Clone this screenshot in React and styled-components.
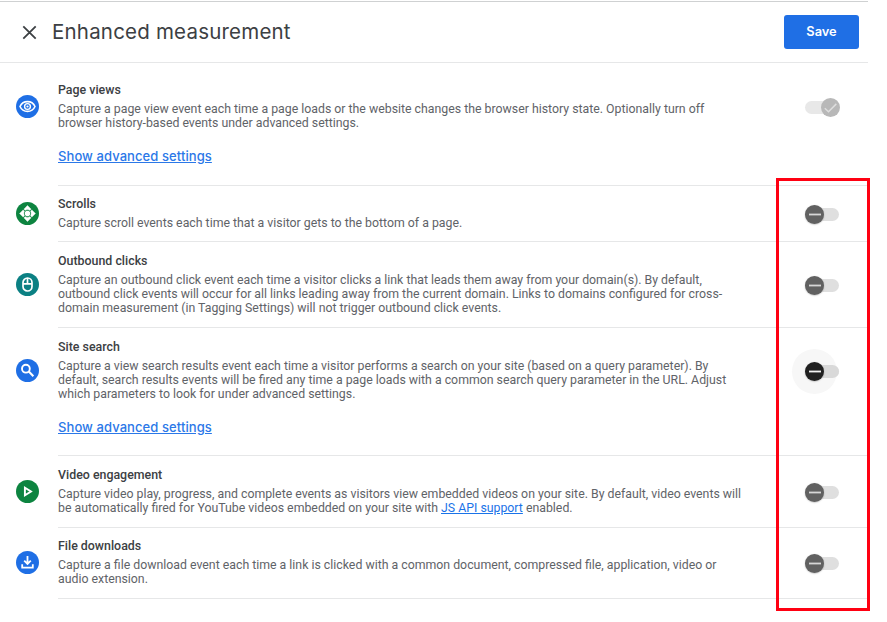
import React from "react";
import styled, { createGlobalStyle, css } from "styled-components";

const GlobalStyle = createGlobalStyle`
  * { box-sizing: border-box; }
  body { margin: 0; background: #fff; font-family: Roboto, sans-serif; }
`;

const Page = styled.main`
  position: relative;
  width: 887px;
  height: 622px;
  overflow: hidden;
  background: #fff;
`;

const Panel = styled.section`
  width: 868px;
  margin-top: 1px;
  border-top: 1px solid #cfd1d2;
`;

const Header = styled.header`
  display: flex;
  align-items: center;
  height: 61px;
  padding: 0 9px 0 22px;
  border-bottom: 1px solid #e6e7e8;
`;

const CloseButton = styled.button`
  display: flex;
  width: 15px;
  height: 15px;
  padding: 0;
  border: 0;
  background: none;
`;

const Title = styled.h1`
  flex: 1;
  margin: 0 0 0 15px;
  font: 400 20.5px/28px Inter, sans-serif;
  letter-spacing: 0.2px;
  color: #3c4043;
`;

const SaveButton = styled.button`
  width: 75px;
  height: 34px;
  padding: 0;
  border: 0;
  border-radius: 3px;
  background: #1f6fe5;
  color: #fff;
  font: 600 12.8px/34px Inter, sans-serif;
`;

const Row = styled.article`
  height: ${(p) => p.$height}px;
  padding-top: ${(p) => p.$inset || 0}px;
`;

const RowMain = styled.div`
  display: grid;
  grid-template-columns: 58px 1fr 64px;
  align-items: center;
  height: ${(p) => p.$height}px;
`;

const RowText = styled.div`
  padding-bottom: 0.6px;
`;

const Divider = styled.hr`
  height: 1px;
  margin: 0 0 0 58px;
  border: 0;
  background: #e6e7e8;
`;

const Badge = styled.span`
  display: flex;
  width: 23px;
  height: 23px;
  margin-left: 16px;
  border-radius: 50%;
  background: ${(p) => p.$color};
  svg { display: block; width: 23px; height: 23px; }
`;

const Name = styled.h2`
  margin: 0 0 5px;
  font: 500 12.4px/15px Roboto, sans-serif;
  color: #3c4043;
`;

const Description = styled.p`
  margin: 0;
  font: 400 12.32px/14.4px Roboto, sans-serif;
  color: #5f6368;
  white-space: nowrap;
`;

const InlineLink = styled.a`
  color: #1a73e8;
  text-decoration: underline;
`;

const AdvancedLink = styled.a`
  display: block;
  width: max-content;
  margin: ${(p) => p.$gap}px 0 0 58px;
  font: 500 13px/18px Inter, sans-serif;
  letter-spacing: 0.08px;
  color: #2b78e8;
  text-decoration: underline;
`;

const Switch = styled.span`
  position: relative;
  display: block;
  width: 34px;
  height: 19px;
  margin: 1px 0 0 1px;
  &::before {
    content: "";
    position: absolute;
    inset: 3px 0;
    border-radius: 7px;
    background: ${(p) => (p.$on ? "#e8e8e8" : "#dfdfdf")};
  }
`;

const Knob = styled.span`
  position: absolute;
  top: 0;
  left: ${(p) => (p.$on ? 15.5 : 0)}px;
  width: 19px;
  height: 19px;
  border-radius: 50%;
  background: ${(p) => (p.$on ? "#b8b8b8" : p.$focused ? "#202020" : "#616161")};
  ${(p) => !p.$on && css`box-shadow: 0 0.5px 1.5px rgba(0, 0, 0, 0.3);`}
  svg { display: block; }
`;

const Halo = styled.span`
  position: absolute;
  top: -13px;
  left: -13px;
  width: 45px;
  height: 45px;
  border-radius: 50%;
  background: #f7f7f7;
`;

const TrackOver = styled.span`
  position: absolute;
  inset: 3px 0;
  border-radius: 7px;
  background: #d9d9d9;
`;

const Highlight = styled.div`
  position: absolute;
  top: 178px;
  left: 776px;
  width: 94px;
  height: 433px;
  border: 3px solid #ff0012;
  pointer-events: none;
`;

function Toggle({ on, focused }) {
  return (
    <Switch role="switch" aria-checked={!!on} $on={on}>
      {focused && <Halo />}
      {focused && <TrackOver />}
      <Knob $on={on} $focused={focused}>
        <svg width="19" height="19" viewBox="0 0 19 19" fill="none">
          {on ? (
            <path d="M3.8 10.2 7.5 13.7 15.3 5.9" stroke="#dedede" strokeWidth="1.5" />
          ) : (
            <path d="M4 9.5H16" stroke={focused ? "#f2f2f2" : "#d6d6d6"} strokeWidth="1.8" />
          )}
        </svg>
      </Knob>
    </Switch>
  );
}

const scrollArrow = "M11.5 3.6 15.1 7.2 13.7 8.3Q11.5 6.9 9.3 8.3L7.9 7.2Z";

const icons = {
  eye: (
    <svg viewBox="0 0 23 23" fill="none" stroke="#fff">
      <path d="M4 11.5C5.5 8.2 8.3 6.6 11.5 6.6S17.5 8.2 19 11.5C17.5 14.8 14.7 16.4 11.5 16.4S5.5 14.8 4 11.5Z" strokeWidth="1.6" />
      <circle cx="11.5" cy="11.5" r="2.9" strokeWidth="1.4" />
      <circle cx="11.5" cy="11.5" r="1.1" fill="#fff" stroke="none" />
    </svg>
  ),
  scroll: (
    <svg viewBox="0 0 23 23" fill="#fff">
      {[0, 90, 180, 270].map((angle) => (
        <path key={angle} d={scrollArrow} transform={`rotate(${angle} 11.5 11.5)`} stroke="#fff" strokeWidth="0.5" />
      ))}
      <circle cx="11.5" cy="11.5" r="2.7" />
    </svg>
  ),
  mouse: (
    <svg viewBox="0 0 23 23" fill="none" stroke="#fff" strokeWidth="1.7">
      <rect x="7" y="5" width="9" height="13" rx="4.5" />
      <path d="M7 10.8H16M11.5 5V10.8" />
    </svg>
  ),
  search: (
    <svg viewBox="0 0 23 23" fill="none" stroke="#fff" strokeWidth="1.9">
      <circle cx="9.9" cy="9.7" r="3.9" />
      <path d="m12.8 12.6 4.6 4.6" strokeWidth="2.1" />
    </svg>
  ),
  play: (
    <svg viewBox="0 0 23 23" fill="none" stroke="#fff" strokeWidth="1.9">
      <path d="M8.9 7.7V15.3L15 11.5Z" />
    </svg>
  ),
  download: (
    <svg viewBox="0 0 23 23" fill="none" stroke="#fff" strokeWidth="1.8">
      <path d="M11.5 5V12.5M8.2 9.7 11.5 13 14.8 9.7M6.2 13.3V16.7H16.8V13.3" />
    </svg>
  ),
};

const rows = [
  {
    name: "Page views", icon: "eye", color: "#1f6fe5", height: 122, main: 71, inset: 8, gap: 5, on: true,
    lines: [
      "Capture a page view event each time a page loads or the website changes the browser history state. Optionally turn off",
      "browser history-based events under advanced settings.",
    ],
  },
  {
    name: "Scrolls", icon: "scroll", color: "#0d8440", height: 55, main: 55,
    lines: ["Capture scroll events each time that a visitor gets to the bottom of a page."],
  },
  {
    name: "Outbound clicks", icon: "mouse", color: "#0b8083", height: 85, main: 85,
    lines: [
      "Capture an outbound click event each time a visitor clicks a link that leads them away from your domain(s). By default,",
      "outbound click events will occur for all links leading away from the current domain. Links to domains configured for cross-",
      "domain measurement (in Tagging Settings) will not trigger outbound click events.",
    ],
  },
  {
    name: "Site search", icon: "search", color: "#1f6fe5", height: 127, main: 85, gap: 5, focused: true,
    lines: [
      "Capture a view search results event each time a visitor performs a search on your site (based on a query parameter). By",
      "default, search results events will be fired any time a page loads with a common search query parameter in the URL. Adjust",
      "which parameters to look for under advanced settings.",
    ],
  },
  {
    name: "Video engagement", icon: "play", color: "#0d8440", height: 71, main: 71,
    lines: [
      "Capture video play, progress, and complete events as visitors view embedded videos on your site. By default, video events will",
      <>be automatically fired for YouTube videos embedded on your site with <InlineLink>JS API support</InlineLink> enabled.</>,
    ],
  },
  {
    name: "File downloads", icon: "download", color: "#1f6fe5", height: 70, main: 69,
    lines: [
      "Capture a file download event each time a link is clicked with a common document, compressed file, application, video or",
      "audio extension.",
    ],
  },
];

export default function App() {
  return (
    <Page>
      <GlobalStyle />
      <Panel>
        <Header>
          <CloseButton aria-label="Close">
            <svg width="15" height="15" viewBox="0 0 15 15" fill="none" stroke="#3c4043" strokeWidth="1.8">
              <path d="m1.3 1.3 12.4 12.4M13.7 1.3 1.3 13.7" />
            </svg>
          </CloseButton>
          <Title>Enhanced measurement</Title>
          <SaveButton>Save</SaveButton>
        </Header>
        {rows.map((r) => (
          <React.Fragment key={r.name}>
            <Row $height={r.height} $inset={r.inset}>
              <RowMain $height={r.main}>
                <Badge $color={r.color}>{icons[r.icon]}</Badge>
                <RowText>
                  <Name>{r.name}</Name>
                  <Description>
                    {r.lines.map((line, i) => (
                      <React.Fragment key={i}>{i > 0 && <br />}{line}</React.Fragment>
                    ))}
                  </Description>
                </RowText>
                <Toggle on={r.on} focused={r.focused} />
              </RowMain>
              {r.gap && <AdvancedLink $gap={r.gap}>Show advanced settings</AdvancedLink>}
            </Row>
            <Divider />
          </React.Fragment>
        ))}
      </Panel>
      <Highlight />
    </Page>
  );
}
